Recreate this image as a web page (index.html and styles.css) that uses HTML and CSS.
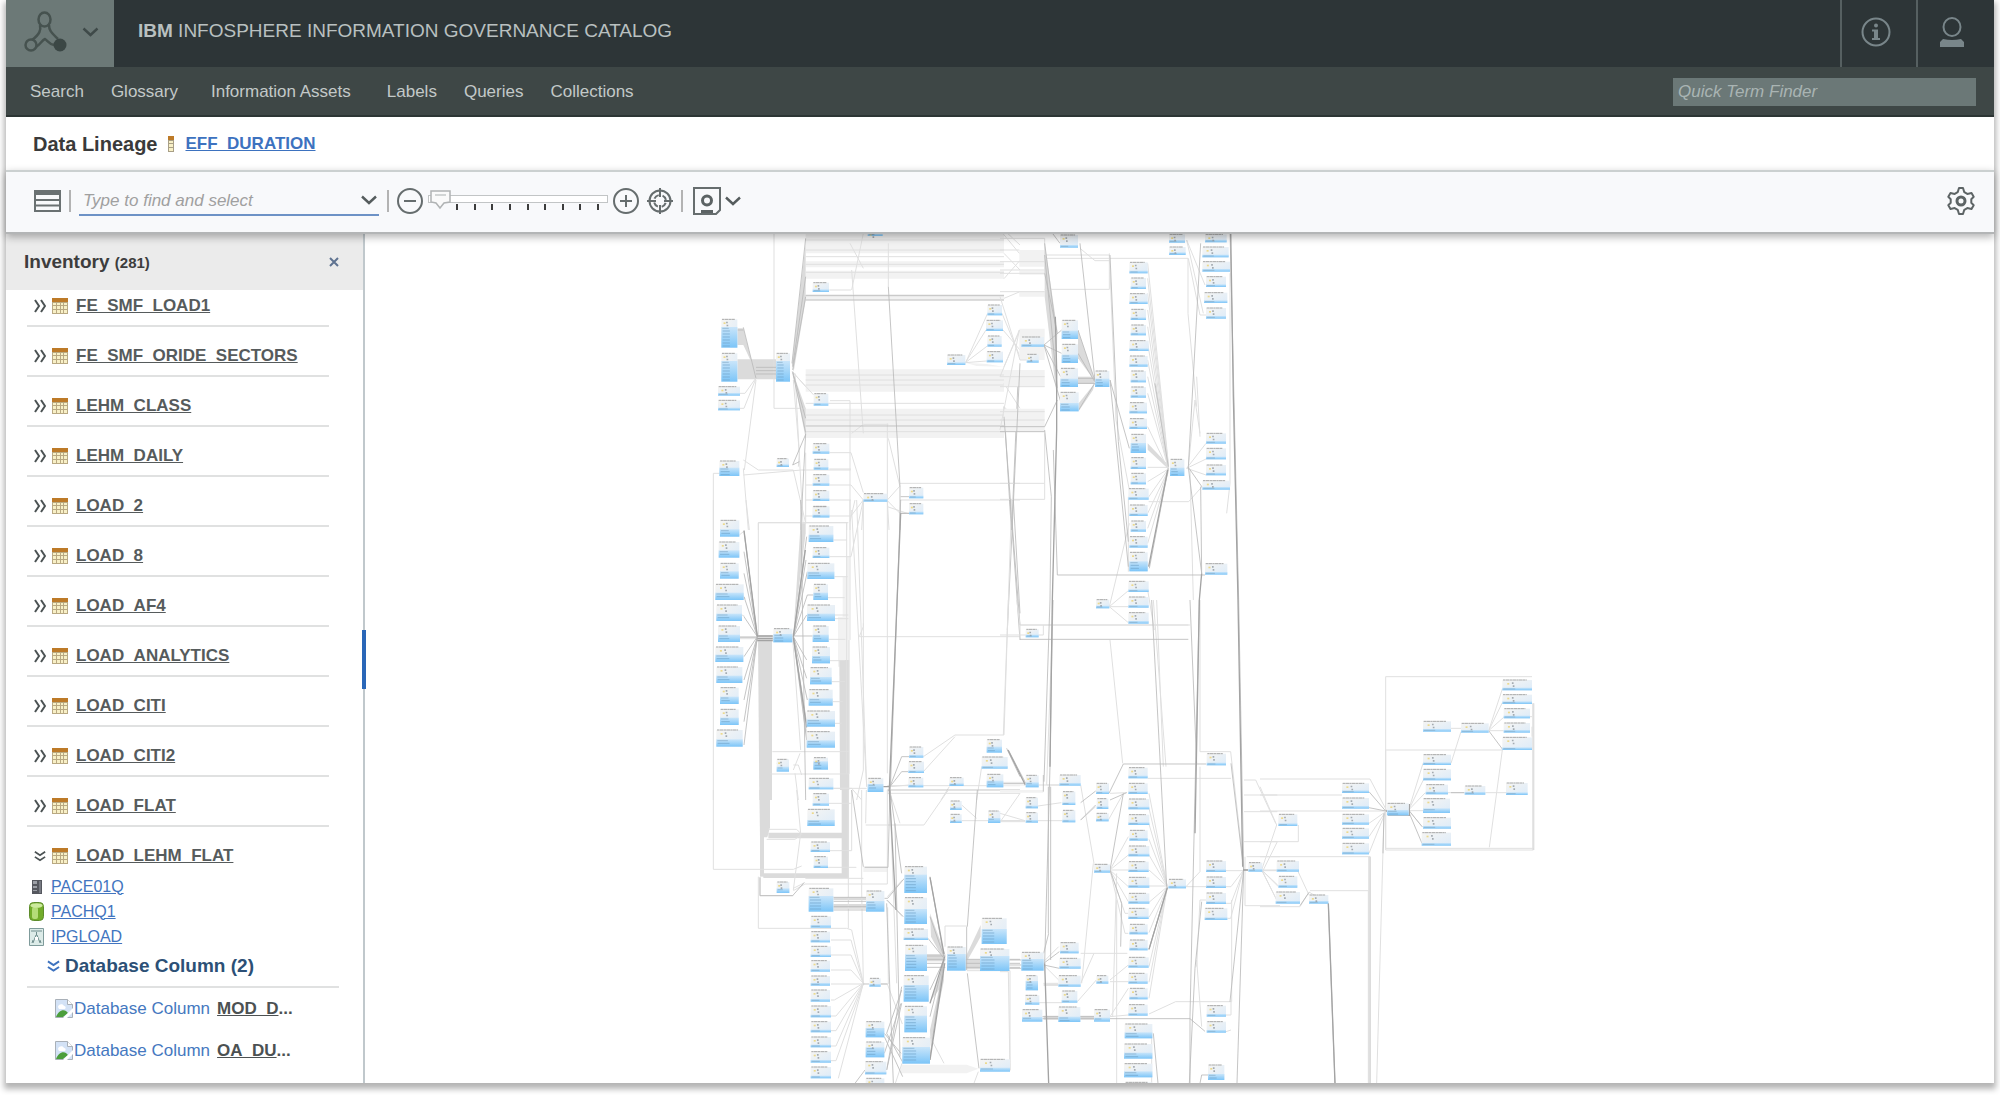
FILE: index.html
```html
<!DOCTYPE html>
<html lang="en">
<head>
<meta charset="utf-8">
<title>Data Lineage - EFF_DURATION</title>
<link rel="stylesheet" href="styles.css">
</head>
<body>
<svg class="defs" width="0" height="0" aria-hidden="true">
  <defs>
    <symbol id="i-more" viewBox="0 0 12 14"><path d="M1 1l4 6-4 6M7 1l4 6-4 6" fill="none" stroke="currentColor" stroke-width="2"/></symbol>
    <symbol id="i-less" viewBox="0 0 14 12"><path d="M1 1l6 4 6-4M1 7l6 4 6-4" fill="none" stroke="currentColor" stroke-width="2"/></symbol>
    <symbol id="i-down" viewBox="0 0 16 10"><path d="M1 1.500l7 6.500 7-6.500" fill="none" stroke="currentColor" stroke-width="2.400"/></symbol>
    <symbol id="i-table" viewBox="0 0 16 16"><path d="M0 1h16v15H0z" fill="#b9a982"/><path d="M0 0h16v4H0z" fill="#bd7a28"/><path d="M1 5h3v2H1zM5 5h3v2H5zM9 5h2v2H9zM12 5h3v2h-3zM1 8h3v3H1zM5 8h3v3H5zM9 8h2v3H9zM12 8h3v3h-3zM1 12h3v3H1zM5 12h3v3H5zM9 12h2v3H9zM12 12h3v3h-3z" fill="#f8f0c6"/></symbol>
    <symbol id="i-broken" viewBox="0 0 19 20"><path d="M.5.5h12l5 5v13H.5z" fill="#d3e2f6" stroke="#a9b0b8"/><path d="M12.500.5v5h5" fill="#fff" stroke="#a9b0b8"/><path d="M3 8c0-3 5-4 6-1 2 0 2 2 1 3H4z" fill="#fff"/><path d="M1 18c2-5 6-8 10-6l2 2-5 4z" fill="#4b9e3c"/><path d="M8 19L18 9v4l-6 6z" fill="#fff"/></symbol>
    <linearGradient id="g-body" x1="0" y1="0" x2="1" y2="1"><stop offset="0" stop-color="#f6f5f3"/><stop offset="1" stop-color="#dcebf9"/></linearGradient>
    <linearGradient id="g-foot" x1="0" y1="0" x2="0" y2="1"><stop offset="0" stop-color="#c9e5fa"/><stop offset="1" stop-color="#7cc5f8"/></linearGradient>
  </defs>
</svg>

<div class="app">
  <header class="masthead">
    <button class="brand" type="button" aria-label="Product menu">
      <svg width="44" height="42" viewBox="0 0 44 42"><g fill="none" stroke="#46524f" stroke-width="2.500"><path d="M17 14c1 5 0 9-8 15M26 14c0 6 3 8 9 14M13 36c4-2 6-7 9-8 2 1 4 5 9 6"/><ellipse cx="21.500" cy="8.500" rx="6" ry="7"/><circle cx="8" cy="34" r="5.500"/></g><circle cx="37" cy="34" r="6.500" fill="#3b4745"/></svg>
      <svg width="17" height="10"><use href="#i-down"/></svg>
    </button>
    <h1 class="product"><b>IBM</b> INFOSPHERE INFORMATION GOVERNANCE CATALOG</h1>
    <button class="mast-btn" type="button" aria-label="Information">
      <svg width="30" height="30" viewBox="0 0 30 30"><circle cx="15" cy="15" r="13.500" fill="none" stroke="currentColor" stroke-width="2"/><circle cx="15" cy="8.500" r="2"/><path d="M11 12.500h6v8.500h2v2h-8v-2h2v-6.500h-2z"/></svg>
    </button>
    <button class="mast-btn" type="button" aria-label="User">
      <svg width="24" height="30" viewBox="0 0 24 30"><ellipse cx="12" cy="10" rx="8.500" ry="9" fill="none" stroke="currentColor" stroke-width="2"/><path d="M3 22q9 2 18 0l3 3v5H0v-5z"/></svg>
    </button>
  </header>

  <nav class="menubar">
    <a href="#">Search</a><a href="#">Glossary</a><a class="wide" href="#">Information Assets</a><a href="#">Labels</a><a href="#">Queries</a><a href="#">Collections</a>
    <input class="finder" type="text" placeholder="Quick Term Finder" aria-label="Quick Term Finder">
  </nav>

  <div class="crumb">
    <h2>Data Lineage</h2>
    <svg width="6" height="16" viewBox="0 0 6 16"><path d="M0 0h6v16H0z" fill="#a89f86"/><path d="M0 0h6v4H0z" fill="#bd7a28"/><path d="M1 5h4v2H1zM1 8h4v3H1zM1 12h4v3H1z" fill="#f8f0c6"/></svg>
    <a href="#">EFF_DURATION</a>
  </div>

  <div class="toolbar">
    <button class="tool" type="button" aria-label="Inventory list"><svg width="27" height="22" viewBox="0 0 27 22"><path d="M1 1h25v20H1zM1 10h25M1 15.500h25" fill="none" stroke="#6a7172" stroke-width="2"/><path d="M0 0h27v5H0z" fill="#6a7172"/></svg></button>
    <i class="sep"></i>
    <div class="search"><input type="text" placeholder="Type to find and select" aria-label="Type to find and select"><button class="tool" type="button" aria-label="Open list"><svg width="16" height="10"><use href="#i-down"/></svg></button></div>
    <i class="sep"></i>
    <div class="zoom">
      <button class="tool" type="button" aria-label="Zoom out"><svg width="26" height="26" viewBox="0 0 26 26"><path d="M7 13h12" stroke="#666d6e" stroke-width="2"/><circle cx="13" cy="13" r="12" fill="none" stroke="#666d6e" stroke-width="2"/></svg></button>
      <div class="slider">
        <input type="range" min="0" max="10" value="0" aria-label="Zoom level">
        <div class="ticks"><i></i><i></i><i></i><i></i><i></i><i></i><i></i><i></i><i></i></div>
      </div>
      <button class="tool" type="button" aria-label="Zoom in"><svg width="26" height="26" viewBox="0 0 26 26"><path d="M7 13h12M13 7v12" stroke="#666d6e" stroke-width="2"/><circle cx="13" cy="13" r="12" fill="none" stroke="#666d6e" stroke-width="2"/></svg></button>
    </div>
    <button class="tool" type="button" aria-label="Center"><svg width="26" height="26" viewBox="0 0 26 26" fill="none" stroke="#666d6e" stroke-width="2"><circle cx="13" cy="13" r="10.500"/><circle cx="13" cy="13" r="6" stroke-dasharray="5.400 4" stroke-dashoffset="-2"/><path d="M13 0v9M13 17v9M0 13h9M17 13h9"/></svg></button>
    <i class="sep"></i>
    <button class="tool save" type="button" aria-label="Save"><svg width="28" height="28" viewBox="0 0 28 28"><path d="M1 1h26v22l-4 4H1z" fill="none" stroke="#666d6e" stroke-width="2"/><circle cx="14" cy="13.500" r="4.500" fill="none" stroke="#5c6364" stroke-width="3"/><path d="M8 23h12v3H8z" fill="#5c6364"/></svg><svg width="16" height="10"><use href="#i-down"/></svg></button>
    <button class="tool settings" type="button" aria-label="Settings"><svg width="28" height="28" viewBox="0 0 28 28" fill="none" stroke="#5d6465"><path stroke-width="2" stroke-linejoin="round" d="M12 1h4l1.300 4.200 3 1.700L24.500 6l2.200 3.800-2.400 2.400v3.600l2.400 2.400-2.200 3.800-4.200-.9-3 1.700L16 27h-4l-1.300-4.200-3-1.700-4.200.9-2.200-3.800 2.400-2.400v-3.600L1.300 9.800 3.500 6l4.200.9 3-1.700z"/><circle cx="14" cy="14" r="4" stroke-width="3"/></svg></button>
  </div>

  <main class="work">
    <aside class="side">
      <header class="side-head"><h3>Inventory <small>(281)</small></h3><button type="button" aria-label="Close"><svg width="10" height="10" viewBox="0 0 10 10"><path d="M1 1l8 8M9 1L1 9" stroke="#5f7391" stroke-width="2"/></svg></button></header>
      <ul class="assets">
        <li><svg width="12" height="14"><use href="#i-more"/></svg><svg width="16" height="16"><use href="#i-table"/></svg><a href="#">FE_SMF_LOAD1</a></li>
        <li><svg width="12" height="14"><use href="#i-more"/></svg><svg width="16" height="16"><use href="#i-table"/></svg><a href="#">FE_SMF_ORIDE_SECTORS</a></li>
        <li><svg width="12" height="14"><use href="#i-more"/></svg><svg width="16" height="16"><use href="#i-table"/></svg><a href="#">LEHM_CLASS</a></li>
        <li><svg width="12" height="14"><use href="#i-more"/></svg><svg width="16" height="16"><use href="#i-table"/></svg><a href="#">LEHM_DAILY</a></li>
        <li><svg width="12" height="14"><use href="#i-more"/></svg><svg width="16" height="16"><use href="#i-table"/></svg><a href="#">LOAD_2</a></li>
        <li><svg width="12" height="14"><use href="#i-more"/></svg><svg width="16" height="16"><use href="#i-table"/></svg><a href="#">LOAD_8</a></li>
        <li><svg width="12" height="14"><use href="#i-more"/></svg><svg width="16" height="16"><use href="#i-table"/></svg><a href="#">LOAD_AF4</a></li>
        <li><svg width="12" height="14"><use href="#i-more"/></svg><svg width="16" height="16"><use href="#i-table"/></svg><a href="#">LOAD_ANALYTICS</a></li>
        <li><svg width="12" height="14"><use href="#i-more"/></svg><svg width="16" height="16"><use href="#i-table"/></svg><a href="#">LOAD_CITI</a></li>
        <li><svg width="12" height="14"><use href="#i-more"/></svg><svg width="16" height="16"><use href="#i-table"/></svg><a href="#">LOAD_CITI2</a></li>
        <li><svg width="12" height="14"><use href="#i-more"/></svg><svg width="16" height="16"><use href="#i-table"/></svg><a href="#">LOAD_FLAT</a></li>
        <li class="open"><svg width="12" height="12"><use href="#i-less"/></svg><svg width="16" height="16"><use href="#i-table"/></svg><a href="#">LOAD_LEHM_FLAT</a></li>
      </ul>
      <ul class="path">
        <li><svg width="16" height="16" viewBox="0 0 16 16"><path d="M3 1h10v14H3z" fill="#55575e"/><path d="M4 2h4v3H4zM4 7h4v2H4zM4 11h4v1H4z" fill="#9c9fa6"/><path d="M10 2h2v12h-2z" fill="#777a82"/></svg><a href="#">PACE01Q</a></li>
        <li><svg width="16" height="20" viewBox="0 0 16 20"><rect x=".5" y=".5" width="14" height="18" rx="4" fill="#72ac2a" stroke="#5d8c2b"/><rect x="3" y="5" width="6" height="12" rx="2" fill="#b4dc78"/><ellipse cx="7.500" cy="3.500" rx="6" ry="2.300" fill="#cdea9d"/></svg><a href="#">PACHQ1</a></li>
        <li><svg width="16" height="18" viewBox="0 0 16 18"><path d="M.5.5h14v17H.5z" fill="#dcebe8" stroke="#7f9b9b"/><path d="M2 3h11M7.500 4v3M4 15l3-8h1l3 8M4 12l-1 3M11 12l1 3" fill="none" stroke="#6f8d8d"/><path d="M6 9h3v3H6z" fill="#fff"/></svg><a href="#">IPGLOAD</a></li>
      </ul>
      <h4 class="group"><svg width="13" height="12"><use href="#i-less"/></svg>Database Column (2)</h4>
      <ul class="columns">
        <li><svg width="19" height="20"><use href="#i-broken"/></svg><span>Database Column</span><b><a href="#">MOD_D</a>...</b></li>
        <li><svg width="19" height="20"><use href="#i-broken"/></svg><span>Database Column</span><b><a href="#">OA_DU</a>...</b></li>
      </ul>
      <div class="grip"></div>
    </aside>
    <section class="canvas" aria-label="Lineage graph">
      <svg id="graph" width="1629" height="850" viewBox="365 234 1629 850"></svg>
    </section>
  </main>
</div>
<script src="graph.js"></script>
</body>
</html>
```
FILE: styles.css
```css
* { box-sizing: border-box; }
body { margin: 0; background: #fff; font: 17px/20px "Liberation Sans", Arial, sans-serif; color: #333; }
h1, h2, h3, h4, ul { margin: 0; padding: 0; font-weight: normal; list-style: none; }
button { border: 0; padding: 0; background: none; display: flex; align-items: center; color: inherit; }
input { font: inherit; border: 0; outline: 0; }
svg { flex: none; display: block; }
.defs { position: absolute; }

.app { display: flex; flex-direction: column; height: calc(100vh - 12px); min-height: 600px; margin: 0 6px 12px; background: #fff; box-shadow: 0 4px 6px 2px #b4b4b4; }

.masthead { display: flex; align-items: stretch; height: 67px; background: #2d3537; color: #b9c0c0; }
.brand { width: 108px; padding: 0 0 3px 17px; gap: 15px; background: #6c7977; color: #3f4a49; }
.product { flex: 1; padding: 21px 24px 0; font-size: 19px; }
.mast-btn { width: 76px; justify-content: center; padding: 0 6px 4px 0; border-left: 2px solid #566061; color: #79868a; }
.mast-btn:last-child { width: 78px; padding-right: 8px; }
.mast-btn svg { fill: currentColor; }

.menubar { display: flex; align-items: center; gap: 27px; height: 50px; padding: 2px 18px 0 24px; background: #3e4746; border-bottom: 2px solid #2c3534; }
.menubar a { color: #c3c9c8; text-decoration: none; }
.menubar .wide { margin: 0 9px 0 6px; }
.finder { width: 303px; height: 28px; margin-left: auto; padding: 0 5px; background: #6b7877; font-style: italic; color: #fff; }
.finder::placeholder { color: #a9b4b3; opacity: 1; }

.crumb { display: flex; align-items: center; gap: 11px; height: 53px; padding: 0 27px; }
.crumb h2 { font-size: 20px; font-weight: bold; color: #3a3a3a; }
.crumb a { font-weight: bold; color: #3d72bf; }

.toolbar { position: relative; z-index: 2; display: flex; align-items: center; gap: 8px; height: 64px; padding: 0 19px 2px 28px; background: #f8f9fb; border-top: 2px solid #cbd0d0; border-bottom: 2px solid #b3b5b6; box-shadow: 0 3px 8px rgba(0, 0, 0, .3); }
.tool { color: #555c5d; }
.sep { width: 2px; height: 22px; background: #b3b3b3; }
.search { display: flex; align-items: center; width: 300px; height: 30px; padding-right: 2px; border-bottom: 2px solid #6d92c6; }
.search input { flex: 1; min-width: 0; padding: 2px 4px 0; background: none; font-style: italic; }
.search input::placeholder { color: #a0a0a0; opacity: 1; }
.zoom { display: flex; align-items: center; gap: 5px; }
.slider { width: 180px; height: 20px; }
.slider input { display: block; width: 100%; height: 14px; margin: 0; appearance: none; background: linear-gradient(#fff, #fff) 1px 5px / 178px 6px no-repeat, linear-gradient(#c2c5c6, #c2c5c6) 0 4px / 180px 8px no-repeat; }
.slider input::-webkit-slider-thumb { appearance: none; width: 24px; height: 20px; margin-top: 4px; background: url("data:image/svg+xml,%3Csvg xmlns='http://www.w3.org/2000/svg' width='24' height='20'%3E%3Cpath d='M3 1h19v11l-6 1-4 5-4-5-5-1z' fill='%23fafafa' stroke='%23b0b3b4' stroke-width='1.500'/%3E%3Cpath d='M7 5h11' stroke='%23c5c8c9' stroke-width='1.500'/%3E%3C/svg%3E") no-repeat; }
.ticks { display: flex; justify-content: space-between; padding: 0 9px 0 28px; }
.ticks i { width: 2px; height: 6px; margin-top: -1px; background: #3c3c3c; }
.save { gap: 4px; padding-left: 2px; }
.settings { margin-left: auto; }

.work { display: flex; flex: 1; min-height: 0; }
.side { position: relative; flex: 0 0 359px; border-right: 2px solid #c0c8cc; }
.side-head { display: flex; align-items: center; justify-content: space-between; height: 56px; padding: 0 24px 0 18px; background: #ebebeb; }
.side-head h3 { font-size: 19px; font-weight: bold; color: #3d3d3d; }
.side-head small { font-size: 15px; }
.assets { padding: 0 34px 0 21px; }
.assets li { display: flex; align-items: center; gap: 6px; padding: 19px 0 9px 7px; border-bottom: 2px solid #e0e1e1; color: #4c5354; }
.assets li:first-child { padding-top: 6px; }
.assets .open { padding-bottom: 8px; border-bottom: 0; }
.assets a { margin-left: 2px; font-weight: bold; color: #565b5c; }
.path { padding-left: 23px; }
.path li { display: flex; align-items: center; gap: 6px; height: 25px; font-size: 16px; }
.path a { color: #4275c0; }
.group { display: flex; align-items: center; gap: 5px; margin: 5px 24px 0 21px; padding: 2px 0 10px 20px; border-bottom: 2px solid #e0e1e1; font-size: 19px; font-weight: bold; color: #2c5076; }
.group svg { color: #3d72bf; }
.columns { padding-left: 49px; }
.columns li { display: flex; align-items: center; height: 42px; color: #4578c0; }
.columns b { margin-left: 7px; color: #4c5152; }
.columns a { color: inherit; }
.grip { position: absolute; right: -3px; top: 396px; width: 4px; height: 59px; background: #2a67b8; }
.canvas { flex: 1; min-width: 0; overflow: hidden; }
```
FILE: graph.js
```js
// Lineage map, split into tiles. Inside a tile three units make one pixel.
// node: left right top bottom [footer height]; line: path data by tone; band: filled bundle of lines.
const tiles = [
  { at: [700, 230], nodes: `64 112 265 353 62,64 112 367 455 62,54 120 467 497,54 120 508 541,58 118 690 738 25,228 270 367 455 62,230 267 683 711,503 548 0 18,338 387 155 186,341 385 488 527,338 388 638 671,341 385 685 719,338 388 731 767,338 388 779 813,338 388 826 862,490 562 788 815,627 670 770 805,627 670 818 853,741 796 372 405,862 906 222 256,858 909 268 303,862 905 315 350,860 909 362 397`,
    bands: ['M317 10H912V70H317z', 'M317 94H912V112H317z', 'M317 122H912V146H317z', 'M317 192H912V212H317z', 'M317 418H912V485H317z', 'M317 536H912V624H317z', 'M796 398L860 402 910 410 830 408z'],
    dark: ['M112 295h18l38 150-10-40-28-60H112z', 'M112 388h116v60H112z', 'M317 40L276 400l5 25 36-215z', 'M278 425l39 110v90z'],
    light: 'M222 0V535H317M40 900V730H58M450 40l40 75M455 120l35 490M455 180l35-170M565 40v130M388 180h65M317 470l-40-45 64 70M390 512h60V900M317 520h595M600 760H960M600 810H960M388 668h65l37 120M388 717h65M388 765h65l37 45M388 810h65M388 858h65l37-48M317 668V880M317 765h21M317 810h21M317 858h21M120 490h15l32-45M120 535h12l36-90M130 690l45 30h105l37 160M130 735l175-15h147M130 715l15 185M168 450l-35 270M280 450l18 220-3 40M285 430l25 470M562 812V580M562 812l40 40M565 625l35 145M600 768l-38 42M455 610l35-27h75M796 400l66-148M796 398l62-98M796 398l66-50M796 398l64-5M906 250l54 130M909 300l51 60M175 900V878H445M912 0l48 45M912 70l48 50M912 146l48-55M912 205l48-20M912 410l48-110M912 460l48 75M912 530l48 50M912 600l48 5M440 878V900M490 812l-5 88M562 812l5 88M317 60H912M317 103H912M317 127H912M317 435H912M317 465H912M317 555H912M317 605H912M317 570H912M317 450H912M317 80H912M317 30H912',
    mid: 'M317 197H912M317 210H912M317 588H912M168 412h60M168 422h60M168 432h60M317 25L276 400M317 140L278 410M317 200L278 420M278 425l39 140M278 428l39 180M278 705l39-92M565 170l35 600v130M602 800h25M602 850h25M278 705l20-10M912 530l22 370M955 430l-20 470M317 610L302 900M168 445L130 292M112 300h18' },
  { at: [1000, 230], nodes: `64 132 318 350,80 116 370 398,180 234 12 53,185 234 268 327 25,185 234 340 399 25,181 234 412 471 25,180 236 484 544 25,285 328 420 471 25,288 328 1106 1135,388 443 94 130,392 438 141 177,388 443 188 222,392 438 235 270,392 438 282 316,388 446 329 363,388 443 375 410,392 438 420 457,392 438 468 503,388 441 515 550,388 441 563 597,392 438 610 669 30,392 438 680 717,392 438 727 763,385 446 773 809,388 443 822 858,392 438 870 905,388 443 917 953,388 443 964 1024 30,385 446 1051 1086,385 446 1098 1133,385 446 1145 1181,507 555 10 38,507 557 48 75,510 553 685 738 25,615 680 10 37,607 686 48 82,607 690 92 125,618 678 137 171,612 682 185 219,618 678 231 266,618 678 607 641,618 678 652 688,618 678 702 736,607 690 749 779,615 682 998 1034`,
    bands: ['M58 60H134V110H58zM58 122H134V134H58zM58 184H134V200H58zM58 296H134V390H58z', 'M12 420H134V470H12zM12 536H134V606H12z'],
    dark: ['M134 40l38 260-4 180-34-280z', 'M234 300l52 155-52-70z', 'M234 440h50v22h-50z', 'M236 520l48-60-5 20-43 64z', 'M443 640l62 65v12l-62-58z'],
    light: 'M0 60h58M0 0l58 70M0 130h134V25H0M0 185h134M134 75h194V178H134M134 85h430V250L590 530M240 55l45 37h43M328 70l20 500 40 210M443 100l62 600M443 145l62 560M443 190l62 515M443 240l62 470M443 290l62 420M443 340l62 370M443 390l62 325M443 440l62 275M443 490l62 225M443 590l62 130M443 712h62M443 755l62-38M443 805l62-88M443 850l62-130M443 895l62-175M443 940l62-215M443 1080l20 120M328 1130l57-48M328 1130l57 0M328 1130l57 48M328 1130l60-250M385 800v225M446 815h120l40-45M560 30l55 135M560 30l50 220M565 85l35 170h18M560 715l58-75M560 715l58-28M560 715l58 20M0 760h134V610M0 808h134V760M690 130V760L680 850M570 720l10 390M590 440l10 180M0 440l58-140M0 200l60 190h20M0 600l58-300M60 1185h510M0 470h134M565 710l20-200 15 100M0 95h134M0 120h134M0 440h134M0 545h134M0 570h134',
    mid: 'M0 590h134M0 605h134M132 345l53-45M132 345l53 25M132 345l50 95M132 345l50 170M240 40l45 410M234 300l52 155M234 370l50 85M234 445h50M234 460h50M236 540l48-80M330 450l58 205M330 450l55 560M330 75l25 560 30 300M505 715l-57 300M565 712l42 60M565 712L605 1030M602 40L565 712M602 770L605 1030M505 710l-40-250M134 130l38 180M134 75l38 400M150 0l30 40M172 510l-38 80M160 660l12 375M172 1035h443M12 560L60 1185M60 400L22 1200M690 0L716 1110M134 600l20 200-4 310M134 40L168 300',
    heavy: 'M166 260L170 420 170 600 157 1110M605 1030l-7 80M446 1010l57-290M692 0l8 500 14 610' },
  { at: [700, 500], nodes: `60 118 58 110 22,56 118 123 173 22,60 116 187 236 22,46 131 250 300 22,49 126 312 363 22,54 120 375 426 22,46 130 438 486 22,49 127 498 549 22,60 116 560 612 22,60 116 625 675 22,49 128 687 740 22,220 277 383 427 25,230 267 775 815 15,338 388 17 52,326 400 75 126 22,338 388 140 174,322 403 187 237 22,340 384 250 300 22,321 405 312 363 22,338 386 375 426 22,336 390 438 490 22,330 395 500 553 22,326 398 566 617 22,320 405 630 680 22,320 405 692 743 22,340 384 770 809 25,326 400 832 868,340 386 880 910,503 550 832 876 24,627 670 738 773,625 672 782 819,625 670 830 862,748 791 830 858,860 906 716 758 18,845 923 768 806,860 910 820 862 20`,
    bands: ['M440 170h8V500H414V350h14V230h12z'],
    dark: ['M174 408h42V900h-38z', 'M170 406h50v18h-50z', 'M418 480h30V870h-28z', 'M302 70h15v30l-36 290z', 'M284 440l36 250v40z'],
    light: 'M40 0V900M138 0l10 90M175 408V68H440V820M400 120h40M388 170h65l37-170M403 230h40M384 293h50M405 345h40M405 356h40M386 418h50M390 482h45M395 545h40M398 605h30M405 670h20M217 755H447M210 822H447V420M450 0V420M465 0l-15 65M490 0v380l-12 30h480M562 0V820M562 20l60 20M570 860l57-5M670 770l95-65h147L935 0M670 815l95-105M562 857H960M500 865H400M562 880H960M277 400l25 350M300 760l-20 50M280 795h15l10 30M285 820l10 80M230 790l20 0M748 860l-25 40M845 800l-15 100M490 370V810l-20 90M455 30l45 830M470 0l30 860M118 105l12-10M131 290l5 5M126 345l8 4M120 410h48M120 416h48M400 865h55l30 35',
    mid: 'M132 92L172 410M132 155l40 255M132 220l40 190M132 290l40 120M132 350l40 60M120 412h50M132 470l40-60M132 540l40-130M132 600l40-190M132 665l40-255M132 735l40-325M280 410l40-300M280 410l38-230M280 410l42-195M280 410l42-125h18M280 410l40-65M280 408h58M280 410l40 70M280 410l40 125M280 410l42 190M280 410l40 260M280 410l40 310M302 0l15 900M602 0L570 900M602 40h25M570 860l35-90h22M570 860l35-45h20M920 745l40 85M930 0l30 420M940 0l20 340M562 870h398',
    heavy: 'M172 408h46M172 416h46M172 422h46M602 40L568 870l5 30M132 92L172 410M280 410l36-260M280 412l40 270M545 860h25M910 850h50' },
  { at: [700, 790], nodes: `230 268 273 309 14,338 387 8 47,322 404 55 108 18,332 390 153 186,341 384 197 234,326 400 292 365 47,332 393 376 413,332 390 422 457,332 393 466 501,332 390 509 545,332 390 555 587,332 390 597 635,332 393 645 682,332 393 692 727,332 393 738 772,332 393 782 818,332 393 828 865,498 553 300 365 32,508 542 562 590,497 553 692 742 28,497 553 753 802 30,495 559 812 853,497 553 862 890,613 681 227 309 55,613 681 320 402 45,611 684 414 450,615 681 463 543 50,611 686 554 635 50,613 681 646 727 50,607 690 740 821 50,750 785 30 60,750 785 70 99,741 797 468 542 50,864 901 60 99 15,845 920 382 462 45,840 928 474 543 45,840 930 805 845 12`,
    bands: ['M606 824H800l35 12-35 14H600z', 'M490 228h72v18h-72z'],
    dark: ['M178 0h32V112l-8 30H180z', 'M180 140h12V260h-12z', 'M205 128H447V145H205z', 'M425 0h22V255h-22z', 'M190 250H447v14H190z', 'M400 322h98v8h-98zM400 342h98v14h-98z', 'M690 370l45 120-4 20-38-70z', 'M681 492h55v22h-55z', 'M690 635l40-110-2 60-38 50z', 'M690 720l42-190v40l-40 200z', 'M797 500l45-95v35l-42 75z', 'M797 508h44v30h-44z'],
    light: 'M40 0v238h240l25-10M175 260v155H440l15 5 35 160M445 0v415M205 118h85l15 15M200 148h85l20-15M290 0l12 130M302 130l-22 170M390 182h65V0M387 40h65M384 232h85M180 262v55h100M280 302l35-20h247V0M310 280l-30 15M316 265H490M485 0v300l5 280M393 450h60l37 130M393 495h60l37 85M393 540h60l37 40M393 582h100M393 630h10l87-50M393 678h15l82-98M393 722h15l82-142M393 768h15l82-188M393 812h15l82-230M415 865l75-285M510 582h55l-2-230M562 582l45 120M562 320l45-50M562 330l45 50M497 100l2-100M497 105h175L745 0M785 45l45 40M785 92H960M901 95L960 10M735 470v-62h65M800 542h130v300M690 740l42 80M835 845l-15 40M606 820l-20 60M570 10l30 90M570 20l20 560',
    mid: 'M553 325l10 0 50-60M560 330l50 50M560 340l20 540M570 0l35 250M585 100l15 700M605 600l-45 130 50 90M605 590l-45 250M553 730l50 60M553 790l50-150M553 740l55 120M560 840l45-200M400 322h98M400 334h98M400 350h98M400 360h98M690 260l42 240M690 380l42 120M684 445l48 60M681 498h55M681 508h55M681 520h55M681 532h55M690 600l42-90M690 680l42-170M690 800l42-290M832 0L802 410M800 410v130M802 550l35 285M180 262v55h98l35-40M455 0l35 230M570 0l-6 232h-70M928 508h32M928 520h32M928 532h32M495 840l-30 40M797 508h44M797 520h44M797 532h44M490 582h18M542 582h20',
    heavy: 'M690 262l42 230M690 810l44-290M690 640l44-140M568 0l20 360' },
  { at: [1000, 600], nodes: `77 116 85 112,77 116 523 562 15,77 114 590 625,77 114 635 668,64 131 1054 1112 35,77 114 1124 1171 28,75 118 1183 1214,66 127 1226 1265 14,178 242 522 557,187 226 572 615,187 226 628 667,180 236 1025 1060,178 242 1072 1106,175 242 1124 1160,185 232 1170 1208,175 241 1218 1266 16,288 327 547 582,290 325 593 627,288 326 637 664,282 330 790 818,289 325 1124 1151,282 330 1226 1265 12,385 443 500 535,385 443 547 582,385 448 594 628,385 448 641 675,388 443 688 722,385 448 735 769,385 446 782 816,385 448 829 863,385 448 877 911,385 446 922 957,388 443 970 1003,388 443 1017 1051,385 446 1069 1103,385 443 1117 1151,388 443 1162 1198,385 443 1211 1247,374 457 1269 1315 18,372 457 1329 1376 18,372 457 1388 1432 18,375 457 1444 1470,505 558 835 865,620 678 458 496,618 678 780 816,618 678 828 864,618 678 876 912,614 682 922 960,620 678 1214 1250,620 678 1262 1298,624 673 1392 1440 18,745 787 785 815`,
    bands: ['M0 545h80v12H0zM0 570h130v8H0z'],
    dark: ['M131 1247h155v12H131z'],
    light: 'M50 0l10 75H565M0 105h130V75M330 120l38 370M160 0L140 555h40M242 555l40 235M60 120v-45M25 0L10 405M242 1060h140M245 1150l35-360M242 1150l40-90M242 660l45-40M325 660l45-80M0 662h75L0 640M114 662h75M114 618l70-10M114 555h64M330 580l50-2M443 535h250M600 455h92l40 355M600 0v455M447 580l55 280M447 625l55 235M447 672l55 188M447 718l55 142M447 765l55 95M447 810l55 50M447 858h55M447 907l55-47M447 952l55-92M447 998l55-138M447 1048l55-188M447 1100l55-240M447 1147l55-287M447 1195l55-335M447 1242l80-37h168V900M558 860h60M558 860l42-45V500M682 955h10l38-145M678 910h15l38-100M678 860h15l38-50M678 812h52M678 1245h15V1205M678 1295l15-5M590 1100l10-200h18M590 1080l15 200M350 900v550M350 820l-12 430M330 810l55-100M330 810l55-45M330 810h55M330 810l55 50M330 810l55 95M330 810l45 130h10M330 810l45 190h10M330 1140l55-45M330 1145h55M330 1250l55-85M330 1250l55-5M732 540h35l60 130M732 585h100M732 635h100M732 725h100L790 810M735 770v147h105M740 770h100M785 810l48 45M785 810l48 95M785 812h55M0 1115h25l5 295H0M116 1208h70M232 1205l57-65M131 1085l45-45M131 1095l50 50M130 1150h45M0 665h75M460 0l38 500M470 0l20 500M455 1290v160',
    mid: 'M0 550h80M25 450l55 105M60 118h505M132 545L150 0M145 560V1000M152 560v520M242 608l45-35M242 660l45-45M327 580l43-88h248M330 600l50-22M330 810l40-230M330 810l35 100-3 130M131 1090l47-35M131 1095l47 10M26 1080h40M26 1095h40M26 1105h40M131 1155h45M127 1250h155M127 1256h155M330 1256h240l45 38M447 1048l55-185M500 860L455 0M460 1300l14 150M570 1450V1250L598 0M605 905l-20 200-17 345M590 490L570 0M716 0l15 810-20 640M693 490l38 320M731 810L690 1205M731 810h15M600 1450l5-25h20M130 575v-50M131 1060l15-60M158 0L150 500L134 1090',
    heavy: 'M157 0L150 500M598 0L585 700M134 1090l12 360M447 1048l55-185M714 0L728 800M24 450l52 105M729 810h15' },
  { at: [1260, 660], nodes: `55 112 460 498,50 117 600 635,55 112 646 683,47 120 693 731,147 205 702 731,246 327 367 399,246 327 411 446,246 327 460 494,246 327 502 536,246 327 547 583,381 446 427 466 16,489 573 181 215,489 573 281 315,489 573 325 361,497 564 371 403,489 570 413 459 14,489 573 470 506,485 573 515 557,603 686 187 218,614 676 375 404,738 803 366 405,727 816 57 91,727 816 101 132,731 810 143 175,731 810 186 218,727 816 229 270`,
    bands: [],
    dark: ['M325 590h8V1270h-8z', 'M817 130h6V570h-6z'],
    light: 'M377 50H816M377 50V565H820V130M377 270H727L688 562M0 357h330l50 95M0 405h246M0 453h378M0 545h115v-50M0 590h330V1270M150 692h175V1270M0 380l50 115L5 630M112 630l35 75M327 490l50-35M327 530l50-75M327 580l50-125M205 731l-58-35M0 740h120l25-40M5 630h50M5 630l50 50M5 630l45 90M446 450l43-140M446 450l45-92M446 450l50-52M446 452h43M446 452l43 50M573 205h30M573 310l30-95M564 398h50M676 398h62M686 212l41-125M686 212l41-84M686 212l45-40M686 212h45M816 170h-10M372 460l-22 810M816 230v-30M328 590V1270M377 272v180M377 453v117h443',
    mid: 'M327 395l50 58M327 443l50 10M446 450l40 50M446 455l40 95M686 212l41 55M205 730l20 540M120 737l27-40M372 460l-3 120M573 398h40',
    heavy: 'M378 453h8M448 432v34H384M205 730l20 540' }
];

const out = [];
const group = (t, body) => `<g transform="translate(${t.at[0]} ${t.at[1]}) scale(.33333)">${body}</g>`;
for (const t of tiles) {
  let s = t.bands.map(d => `<path d="${d}" fill="#f2f2f2"/>`).join('');
  s += t.dark.map(d => `<path d="${d}" fill="#dbdbdb"/>`).join('');
  s += `<g fill="none"><path d="${t.light}" stroke="#e0e0e0" stroke-width="3"/><path d="${t.mid}" stroke="#b9b9b9" stroke-width="2.500"/>`;
  if (t.heavy) s += `<path d="${t.heavy}" stroke="#a3a3a3" stroke-width="4"/>`;
  out.push(group(t, s + '</g>'));
}
for (const t of tiles) {
  out.push(group(t, t.nodes.split(',').map(n => {
    const [l, r, top, bottom, foot = 8] = n.trim().split(' ').map(Number);
    const w = r - l, fy = bottom - foot, tall = foot > 12;
    let s = `<rect x="${l}" y="${top + 3}" width="${w}" height="${bottom - top - 3}" fill="url(#g-body)"/>`;
    s += `<rect x="${l}" y="${fy}" width="${w}" height="${foot}" fill="url(#g-foot)"/>`;
    s += `<path d="M${l + 2} ${top + 3}h${w * 0.8}" stroke="#a7a8a8" stroke-width="3" stroke-dasharray="7 1 11 1"/>`;
    s += `<path d="M${l + w * 0.2} ${top + 12}v5" stroke="#ecd98c" stroke-width="6"/><path d="M${l + w * 0.35} ${top + 10}v5M${l + w * 0.38} ${top + 19}v5" stroke="#a3aab0" stroke-width="5"/>`;
    s += `<path d="M${l + 3} ${fy + 4}h${w * 0.4}" stroke="#84a9c6" stroke-width="2"/>`;
    if (tall) for (let y = fy + 12; y < bottom - 3; y += 9) s += `<path d="M${l + 4} ${y}h${w * 0.45}" stroke="#6fa3c8" stroke-width="2"/>`;
    return s;
  }).join('')));
}
document.getElementById('graph').innerHTML = out.join('');
```
